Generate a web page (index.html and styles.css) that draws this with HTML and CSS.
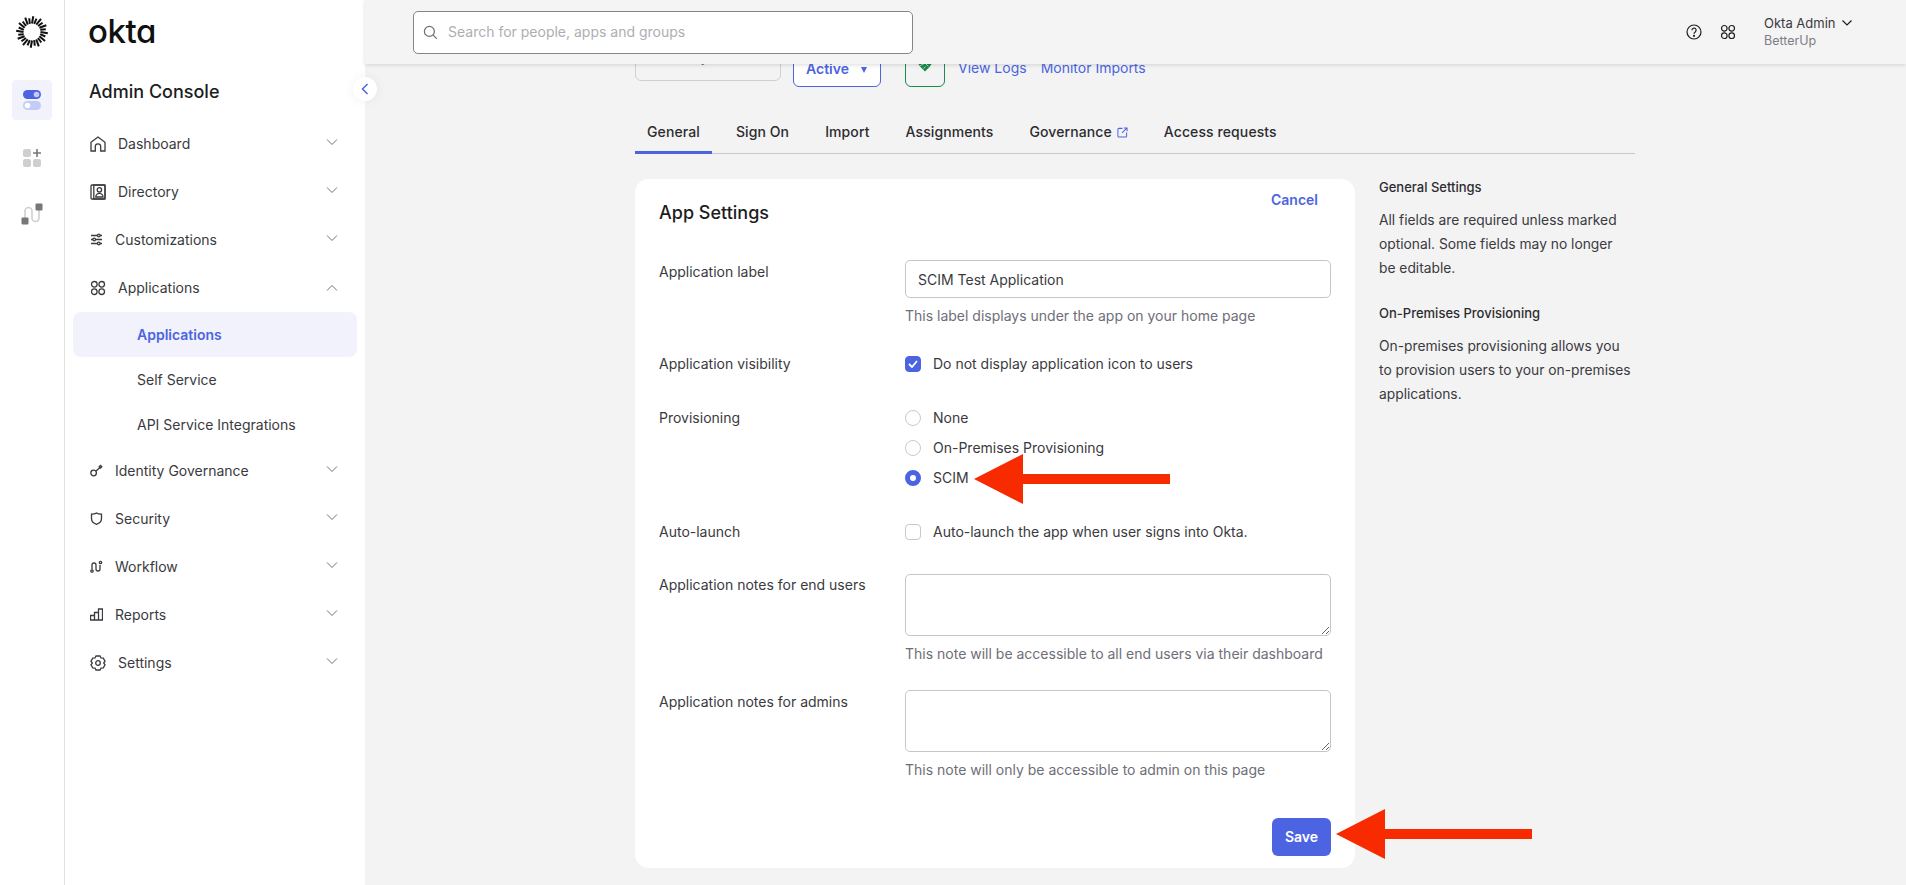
FILE: index.html
```html
<!DOCTYPE html>
<html lang="en">
<head>
<meta charset="utf-8">
<title>Okta Admin Console</title>
<link rel="stylesheet" href="styles.css">
</head>
<body>
<div class="app">
  <nav class="rail">
    <svg class="rail-logo" width="34" height="34" viewBox="0 0 34 34">
      <g stroke="#111" stroke-width="2" stroke-linecap="butt">
        <path d="M17 8.500L18.300 1.200"/>
        <path transform="rotate(15 17 17)" d="M17 8.500L17.900 3"/>
        <path transform="rotate(30 17 17)" d="M17 8.500L18.300 1.200"/>
        <path transform="rotate(45 17 17)" d="M17 8.500L17.900 3"/>
        <path transform="rotate(60 17 17)" d="M17 8.500L18.300 1.200"/>
        <path transform="rotate(75 17 17)" d="M17 8.500L17.900 3"/>
        <path transform="rotate(90 17 17)" d="M17 8.500L18.300 1.200"/>
        <path transform="rotate(105 17 17)" d="M17 8.500L17.900 3"/>
        <path transform="rotate(120 17 17)" d="M17 8.500L18.300 1.200"/>
        <path transform="rotate(135 17 17)" d="M17 8.500L17.900 3"/>
        <path transform="rotate(150 17 17)" d="M17 8.500L18.300 1.200"/>
        <path transform="rotate(165 17 17)" d="M17 8.500L17.900 3"/>
        <path transform="rotate(180 17 17)" d="M17 8.500L18.300 1.200"/>
        <path transform="rotate(195 17 17)" d="M17 8.500L17.900 3"/>
        <path transform="rotate(210 17 17)" d="M17 8.500L18.300 1.200"/>
        <path transform="rotate(225 17 17)" d="M17 8.500L17.900 3"/>
        <path transform="rotate(240 17 17)" d="M17 8.500L18.300 1.200"/>
        <path transform="rotate(255 17 17)" d="M17 8.500L17.900 3"/>
        <path transform="rotate(270 17 17)" d="M17 8.500L18.300 1.200"/>
        <path transform="rotate(285 17 17)" d="M17 8.500L17.900 3"/>
        <path transform="rotate(300 17 17)" d="M17 8.500L18.300 1.200"/>
        <path transform="rotate(315 17 17)" d="M17 8.500L17.900 3"/>
        <path transform="rotate(330 17 17)" d="M17 8.500L18.300 1.200"/>
        <path transform="rotate(345 17 17)" d="M17 8.500L17.900 3"/>
      </g>
    </svg>
    <div class="rail-item rail-item-active">
      <svg width="18" height="20" viewBox="0 0 18 20"><rect y="0" width="18" height="9" rx="4.500" fill="#4c64e1"/><circle cx="13.500" cy="4.500" r="2.800" fill="#c4ccf5"/><rect y="11" width="18" height="9" rx="4.500" fill="#c4ccf5"/><circle cx="4.500" cy="15.500" r="2.800" fill="#fff"/></svg>
    </div>
    <div class="rail-item rail-item-tight">
      <svg width="20" height="20" viewBox="0 0 20 20"><g fill="#cfcfcf"><rect x="1" y="1" width="8" height="8" rx="2"/><rect x="1" y="11" width="8" height="8" rx="2"/><rect x="11" y="11" width="8" height="8" rx="2"/></g><path d="M15 1v8M11 5h8" stroke="#777" stroke-width="1.600" fill="none"/></svg>
    </div>
    <div class="rail-item">
      <svg width="22" height="22" viewBox="0 0 22 22"><path d="M4 16V8a3.500 3.500 0 0 1 7 0v7a3.500 3.500 0 0 0 7 0V6" fill="none" stroke="#cfcfcf" stroke-width="1.600"/><rect x="0.500" y="14.500" width="7" height="7" rx="1" fill="#777"/><rect x="14.500" y="0.500" width="7" height="7" rx="1" fill="#777"/></svg>
    </div>
  </nav>

  <aside class="sidebar">
    <div class="brand">okta</div>
    <h1 class="console-title">Admin Console</h1>
    <ul class="nav">
      <li class="nav-row">
        <svg class="nav-icon" viewBox="0 0 16 16"><path d="M1 15V6.300L8 1l7 5.300V15h-4.300v-4.500a2.700 2.700 0 0 0-5.400 0V15z"/></svg>
        <span class="nav-label">Dashboard</span>
        <svg class="nav-chevron" viewBox="0 0 12 12"><path d="M1 3.500l5 5 5-5"/></svg>
      </li>
      <li class="nav-row">
        <svg class="nav-icon" viewBox="0 0 16 16"><rect x="1" y="1" width="14" height="14" rx="1"/><rect x="3.800" y="1" width="11.200" height="14"/><circle cx="9.400" cy="5.800" r="2.200"/><path d="M5.800 13a3.600 3.600 0 0 1 7.200 0z"/></svg>
        <span class="nav-label">Directory</span>
        <svg class="nav-chevron" viewBox="0 0 12 12"><path d="M1 3.500l5 5 5-5"/></svg>
      </li>
      <li class="nav-row">
        <svg class="nav-icon nav-icon-sm" viewBox="0 0 13 13"><path d="M1 2.500h6.500M10 2.500h2M1 6.500h2M5.500 6.500H12M1 10.500h6.500M10 10.500h2"/><circle cx="8.800" cy="2.500" r="1.300"/><circle cx="4.200" cy="6.500" r="1.300"/><circle cx="8.800" cy="10.500" r="1.300"/></svg>
        <span class="nav-label">Customizations</span>
        <svg class="nav-chevron" viewBox="0 0 12 12"><path d="M1 3.500l5 5 5-5"/></svg>
      </li>
      <li class="nav-row">
        <svg class="nav-icon" viewBox="0 0 16 16"><circle cx="4.300" cy="4.300" r="2.800"/><circle cx="11.700" cy="4.300" r="2.800"/><circle cx="4.300" cy="11.700" r="2.800"/><circle cx="11.700" cy="11.700" r="2.800"/></svg>
        <span class="nav-label">Applications</span>
        <svg class="nav-chevron nav-chevron-up" viewBox="0 0 12 12"><path d="M1 8.500l5-5 5 5"/></svg>
      </li>
      <li class="nav-sub nav-sub-active">Applications</li>
      <li class="nav-sub">Self Service</li>
      <li class="nav-sub">API Service Integrations</li>
      <li class="nav-row">
        <svg class="nav-icon nav-icon-sm" viewBox="0 0 13 13"><circle cx="3.600" cy="9" r="2.800"/><path d="M5.800 7.200L10 3.500"/><path d="M9.200 2.800l1.300-1.300 1.300 1.300-1.300 1.300z"/></svg>
        <span class="nav-label">Identity Governance</span>
        <svg class="nav-chevron" viewBox="0 0 12 12"><path d="M1 3.500l5 5 5-5"/></svg>
      </li>
      <li class="nav-row">
        <svg class="nav-icon nav-icon-sm" viewBox="0 0 13 13"><path d="M1.500 2.200c3.500 0 5-1.200 5-1.200s1.500 1.200 5 1.200v4.300c0 3-2.500 5-5 5.800-2.500-.8-5-2.800-5-5.800z"/></svg>
        <span class="nav-label">Security</span>
        <svg class="nav-chevron" viewBox="0 0 12 12"><path d="M1 3.500l5 5 5-5"/></svg>
      </li>
      <li class="nav-row">
        <svg class="nav-icon nav-icon-sm" viewBox="0 0 13 13"><path d="M2 9.500V5a2 2 0 0 1 4 0v4a2 2 0 0 0 4 0V5"/><circle cx="2" cy="11" r="1.200"/><circle cx="10.500" cy="2.500" r="1.200"/></svg>
        <span class="nav-label">Workflow</span>
        <svg class="nav-chevron" viewBox="0 0 12 12"><path d="M1 3.500l5 5 5-5"/></svg>
      </li>
      <li class="nav-row">
        <svg class="nav-icon nav-icon-sm" viewBox="0 0 13 13"><path d="M.5 12V7.500h4V12zM4.500 12V4.500h4V12zM8.500 12V1h4v11z"/></svg>
        <span class="nav-label">Reports</span>
        <svg class="nav-chevron" viewBox="0 0 12 12"><path d="M1 3.500l5 5 5-5"/></svg>
      </li>
      <li class="nav-row">
        <svg class="nav-icon" viewBox="0 0 16 16"><path d="M6 1h4l1 2 2.300.2 1.700 3L13.700 8l1.300 1.800-1.700 3L11 13l-1 2H6l-1-2-2.300-.2-1.700-3L2.300 8 1 6.200l1.700-3L5 3z"/><circle cx="8" cy="8" r="2.300"/></svg>
        <span class="nav-label">Settings</span>
        <svg class="nav-chevron" viewBox="0 0 12 12"><path d="M1 3.500l5 5 5-5"/></svg>
      </li>
    </ul>
  </aside>

  <div class="main">
    <header class="topbar">
      <label class="search">
        <svg class="search-icon" viewBox="0 0 16 16"><circle cx="6.800" cy="6.800" r="5.300"/><path d="M10.800 10.800l4 4"/></svg>
        <input class="search-input" type="text" placeholder="Search for people, apps and groups">
      </label>
      <div class="top-actions">
        <svg class="top-icon" viewBox="0 0 16 16"><circle cx="8" cy="8" r="7"/><path d="M5.900 6.200a2.100 2.100 0 1 1 3.300 1.700C8.400 8.500 8 8.900 8 9.800"/><circle class="dot" cx="8" cy="11.800" r=".5"/></svg>
        <svg class="top-icon" viewBox="0 0 16 16"><circle cx="4.300" cy="4.300" r="2.800"/><circle cx="11.700" cy="4.300" r="2.800"/><circle cx="4.300" cy="11.700" r="2.800"/><circle cx="11.700" cy="11.700" r="2.800"/></svg>
        <div class="user">
          <div class="user-name">Okta Admin</div>
          <div class="user-org">BetterUp</div>
        </div>
        <svg class="user-chevron" viewBox="0 0 12 12"><path d="M1.500 3.500L6 8l4.500-4.500"/></svg>
      </div>
    </header>

    <main class="content">
      <div class="app-header">
        <div class="ghost-btn">Sync</div>
        <div class="status-select">Active <span class="caret"></span></div>
        <div class="hand-btn">
          <svg width="14" height="12" viewBox="0 0 14 12"><path d="M0 3.500L2.500 1 5 2l2-1 2 1 2.500-1L14 3.500 11.500 7 7 11.500 2.500 7z" fill="#1d8a4e"/><path d="M4 5l3-2 3.500 3.500M5.500 8.500l2-2M2 6l2-1.500" fill="none" stroke="#e9f5ee" stroke-width=".7"/></svg>
        </div>
        <a class="header-link">View Logs</a>
        <a class="header-link">Monitor Imports</a>
      </div>

      <div class="tabs">
        <div class="tab tab-active">General</div>
        <div class="tab">Sign On</div>
        <div class="tab">Import</div>
        <div class="tab">Assignments</div>
        <div class="tab">Governance
          <svg class="ext-icon" viewBox="0 0 12 12"><path d="M6 1.500H2a1 1 0 0 0-1 1v7.500a1 1 0 0 0 1 1h7.500a1 1 0 0 0 1-1V6M7.500 1h3.500v3.500M11 1L5.500 6.500"/></svg>
        </div>
        <div class="tab">Access requests</div>
      </div>

      <div class="columns">
        <section class="card">
          <div class="card-head">
            <h2 class="card-title">App Settings</h2>
            <a class="cancel">Cancel</a>
          </div>

          <div class="row row-first">
            <div class="row-label">Application label</div>
            <div class="row-field">
              <input class="text-input" type="text" value="SCIM Test Application">
              <div class="help">This label displays under the app on your home page</div>
            </div>
          </div>

          <div class="row row-visibility">
            <div class="row-label">Application visibility</div>
            <div class="row-field">
              <div class="choice">
                <span class="check check-on"><svg width="10" height="8" viewBox="0 0 10 8"><path d="M1 4l3 3 5-6" fill="none" stroke="#fff" stroke-width="1.800"/></svg></span>
                Do not display application icon to users
              </div>
            </div>
          </div>

          <div class="row row-wide">
            <div class="row-label">Provisioning</div>
            <div class="row-field radios">
              <div class="choice"><span class="radio"></span>None</div>
              <div class="choice"><span class="radio"></span>On-Premises Provisioning</div>
              <div class="choice"><span class="radio radio-on"></span>SCIM</div>
            </div>
          </div>

          <div class="row row-wide">
            <div class="row-label">Auto-launch</div>
            <div class="row-field">
              <div class="choice"><span class="check"></span>Auto-launch the app when user signs into Okta.</div>
            </div>
          </div>

          <div class="row row-notes">
            <div class="row-label row-label-note">Application notes for end users</div>
            <div class="row-field">
              <textarea class="text-area"></textarea>
              <div class="help">This note will be accessible to all end users via their dashboard</div>
            </div>
          </div>

          <div class="row row-notes-2">
            <div class="row-label row-label-admin">Application notes for admins</div>
            <div class="row-field">
              <textarea class="text-area"></textarea>
              <div class="help">This note will only be accessible to admin on this page</div>
            </div>
          </div>

          <div class="card-foot"><button class="save" type="button">Save</button></div>
        </section>

        <aside class="side-help">
          <h3 class="side-title">General Settings</h3>
          <p class="side-text">All fields are required unless marked<br>optional. Some fields may no longer<br>be editable.</p>
          <h3 class="side-title side-title-next">On-Premises Provisioning</h3>
          <p class="side-text">On-premises provisioning allows you<br>to provision users to your on-premises<br>applications.</p>
        </aside>
      </div>
    </main>
  </div>

  <button class="collapse" type="button" aria-label="Collapse">
    <svg width="8" height="12" viewBox="0 0 8 12"><path d="M6.500 1L1.500 6l5 5" fill="none" stroke="#4c64e1" stroke-width="1.500"/></svg>
  </button>

  <svg class="arrow arrow-scim" width="196" height="50" viewBox="0 0 196 50"><path d="M0 25L49 0v20h147v10H49v20z" fill="#f72a00"/></svg>
  <svg class="arrow arrow-save" width="196" height="50" viewBox="0 0 196 50"><path d="M0 25L49 0v20h147v10H49v20z" fill="#f72a00"/></svg>
</div>
</body>
</html>
```

FILE: styles.css
```css
* { box-sizing: border-box; }
html, body { margin: 0; height: 100%; overflow: hidden; }
body {
  font-family: "Inter", "Liberation Sans", sans-serif;
  font-size: 14px;
  line-height: 20px;
  color: #3a3a40;
  background: #f3f3f3;
}
h1, h2, h3, p, ul { margin: 0; padding: 0; }
ul { list-style: none; }

.app { position: relative; display: flex; height: 885px; width: 1906px; }

/* Left icon rail */
.rail {
  flex: 0 0 65px;
  background: #fff;
  border-right: 1px solid #e1e1e1;
  display: flex;
  flex-direction: column;
  align-items: center;
  padding-top: 15px;
}
.rail-logo { margin-bottom: 31px; }
.rail-item {
  width: 40px;
  height: 40px;
  border-radius: 4px;
  display: flex;
  align-items: center;
  justify-content: center;
  margin-bottom: 18px;
}
.rail-item-tight { margin-bottom: 16px; }
.rail-item-active { background: #f1f2fc; }

/* Sidebar */
.sidebar { flex: 0 0 300px; background: #fff; }
.brand {
  font-size: 33px;
  line-height: 40px;
  font-weight: 500;
  font-feature-settings: "cv11";
  letter-spacing: -0.4px;
  color: #111;
  padding: 11px 0 0 23px;
  height: 51px;
}
.console-title {
  font-size: 18px;
  font-weight: 500;
  line-height: 24px;
  color: #1d1d21;
  padding: 29px 0 0 24px;
  height: 69px;
}
.nav-row {
  height: 48px;
  display: flex;
  align-items: center;
  padding: 0 27px 0 25px;
  color: #3a3a40;
}
.nav-icon {
  flex: none;
  width: 16px;
  height: 16px;
  margin-right: 12px;
  margin-top: -1px;
  fill: none;
  stroke: #3a3a40;
  stroke-width: 1.300;
}
.nav-icon-sm { width: 13px; height: 13px; }
.nav-label { flex: 1; }
.nav-chevron {
  width: 12px;
  height: 12px;
  margin-top: -4px;
  fill: none;
  stroke: #6e6e78;
  stroke-width: 1;
}
.nav-chevron-up { margin-top: 0; }
.nav-sub {
  height: 45px;
  line-height: 45px;
  margin: 0 8px;
  padding-left: 64px;
  border-radius: 8px;
}
.nav-sub-active { background: #f1f2fc; color: #4c64e1; font-weight: 600; }

.collapse {
  position: absolute;
  left: 353px;
  top: 77px;
  width: 24px;
  height: 24px;
  padding: 0;
  border: 0;
  border-radius: 50%;
  background: #fff;
  box-shadow: 0 0 12px rgba(0, 0, 0, .06);
  display: flex;
  align-items: center;
  justify-content: center;
  z-index: 3;
}

/* Main */
.main { flex: 1; min-width: 0; display: flex; flex-direction: column; height: 885px; }
.topbar {
  position: relative;
  z-index: 2;
  flex: 0 0 64px;
  background: #f4f4f4;
  box-shadow: 0 1px 4px rgba(0, 0, 0, .14);
  display: flex;
  align-items: center;
  padding: 0 0 0 48px;
  justify-content: space-between;
}
.search {
  width: 500px;
  height: 43px;
  background: #fff;
  border: 1px solid #85858c;
  border-radius: 5px;
  display: flex;
  align-items: center;
  padding-left: 9px;
}
.search-icon {
  flex: none;
  width: 15px;
  height: 15px;
  margin-right: 10px;
  fill: none;
  stroke: #6e6e78;
  stroke-width: 1.300;
}
.search-input {
  flex: 1;
  border: 0;
  outline: 0;
  padding: 0;
  font: inherit;
  background: transparent;
}
.search-input::placeholder { color: #aeaeb2; opacity: 1; }
.top-actions { display: flex; align-items: center; padding-right: 53px; }
.top-icon {
  width: 16px;
  height: 16px;
  margin-right: 18px;
  fill: none;
  stroke: #1d1d21;
  stroke-width: 1.200;
}
.dot { fill: #1d1d21; }
.user { margin-left: 10px; width: 77px; font-size: 13px; line-height: 18px; }
.user-name { color: #3a3a40; }
.user-org { color: #7d7d85; font-size: 12.500px; }
.user-chevron {
  width: 12px;
  height: 12px;
  margin: -19px 0 0 0;
  fill: none;
  stroke: #1d1d21;
  stroke-width: 1.200;
}

/* Page content, scrolled so that the header passes under the top bar */
.content { flex: 1; min-height: 0; overflow: hidden; padding-left: 270px; width: 1270px; }
.app-header { display: flex; align-items: flex-start; margin-top: -24px; height: 47px; }
.ghost-btn {
  width: 146px;
  height: 41px;
  border: 1px solid #d0d0d0;
  border-radius: 6px;
  text-align: center;
  line-height: 32px;
  color: #6e6e78;
  margin-right: 12px;
}
.status-select {
  width: 88px;
  height: 47px;
  background: #fff;
  border: 1px solid #4c64e1;
  border-radius: 6px;
  color: #4c64e1;
  font-weight: 600;
  padding: 18px 0 0 12px;
  margin-right: 24px;
  display: flex;
  align-items: flex-start;
}
.caret {
  width: 0;
  height: 0;
  margin: 8px 0 0 12px;
  border-left: 3.500px solid transparent;
  border-right: 3.500px solid transparent;
  border-top: 6px solid #4c64e1;
}
.hand-btn {
  width: 40px;
  height: 47px;
  border: 1px solid #1d8a4e;
  border-radius: 6px;
  display: flex;
  justify-content: center;
  padding-top: 19px;
  margin-right: 13px;
}
.header-link { color: #4c64e1; margin: 18px 14px 0 0; }

.tabs {
  display: flex;
  width: 1000px;
  height: 46px;
  margin-top: 21px;
  border-bottom: 1px solid #c9c9c9;
}
.tab {
  height: 46px;
  padding: 14px 12px 0;
  margin-right: 12px;
  font-weight: 500;
  letter-spacing: 0.1px;
  color: #2c2c30;
  display: flex;
  align-items: flex-start;
}
.tab-active { border-bottom: 3px solid #4c64e1; }
.ext-icon {
  width: 11px;
  height: 11px;
  margin: 5px 0 0 5px;
  fill: none;
  stroke: #4c64e1;
  stroke-width: 1.100;
}

.columns { display: flex; margin-top: 25px; align-items: flex-start; }
.card {
  flex: 0 0 720px;
  height: 689px;
  background: #fff;
  border-radius: 14px;
  padding: 0 24px;
}
.card-head { display: flex; justify-content: space-between; align-items: flex-start; height: 81px; }
.card-title { font-size: 18px; font-weight: 500; line-height: 24px; margin-top: 22px; color: #1d1d21; }
.cancel { color: #4c64e1; font-weight: 600; margin: 11px 13px 0 0; }

.row { display: flex; }
.row-label { flex: 0 0 246px; }
.row-field { flex: 1; }
.row-first .row-label { padding-top: 2px; }
.row-visibility { margin-top: 28px; }
.row-wide { margin-top: 34px; }
.row-notes { margin-top: 32px; }
.row-notes-2 { margin-top: 26px; }
.row-label-note { padding-top: 1px; }
.row-label-admin { padding-top: 2px; }

.text-input, .text-area {
  display: block;
  width: 426px;
  border: 1px solid #c5c5c9;
  border-radius: 5px;
  background: #fff;
  font: inherit;
  color: #3a3a40;
  outline: 0;
}
.text-input { height: 38px; padding: 0 12px; }
.text-area { height: 62px; padding: 8px 12px; resize: vertical; }
.help { color: #6e6e78; margin-top: 8px; }

.choice { display: flex; align-items: center; height: 20px; }
.radios .choice + .choice { margin-top: 10px; }
.check, .radio {
  flex: none;
  width: 16px;
  height: 16px;
  margin-right: 12px;
  border: 1.500px solid #c9c9cc;
  background: #fff;
  display: flex;
  align-items: center;
  justify-content: center;
}
.check { border-radius: 4px; }
.radio { border-radius: 50%; }
.check-on { background: #4c64e1; border-color: #4c64e1; }
.radio-on { border: 5px solid #4c64e1; }

.card-foot { display: flex; justify-content: flex-end; margin-top: 38px; }
.save {
  width: 59px;
  height: 38px;
  border: 0;
  border-radius: 6px;
  background: #4c64e1;
  color: #fff;
  font: inherit;
  font-weight: 600;
  padding: 0;
}

.side-help { flex: 0 0 256px; margin-left: 24px; }
.side-title { font-size: 13px; font-weight: 500; line-height: 16px; color: #2c2c30; }
.side-title-next { margin-top: 25px; }
.side-text { font-size: 13.800px; line-height: 24px; margin-top: 13px; white-space: nowrap; }

/* Annotation arrows drawn over the screenshot */
.arrow { position: absolute; z-index: 4; }
.arrow-scim { left: 974px; top: 454px; }
.arrow-save { left: 1336px; top: 809px; }
```
